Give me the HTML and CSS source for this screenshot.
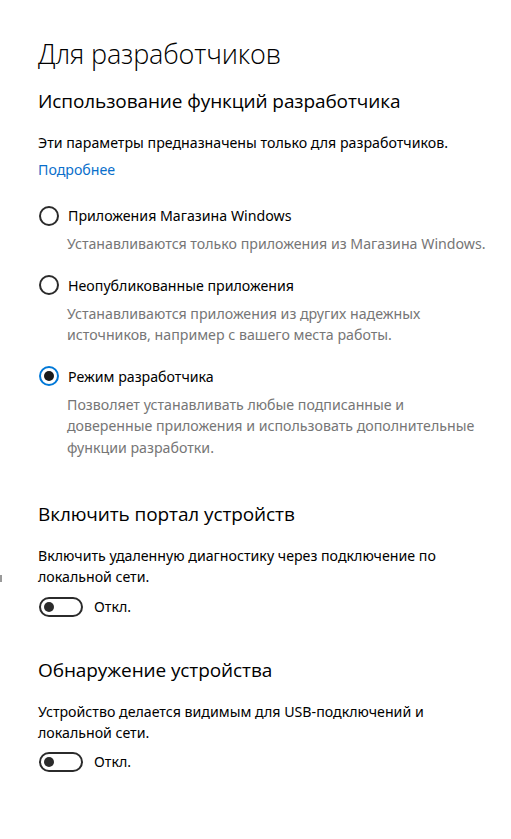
FILE: index.html
```html
<!DOCTYPE html>
<html lang="ru">
<head>
<meta charset="utf-8">
<title>Для разработчиков</title>
<link rel="stylesheet" href="styles.css">
</head>
<body>
<div class="edge-mark"></div>
<main class="page">
  <h1 class="title">Для разработчиков</h1>

  <section class="group">
    <h2 class="heading heading-first">Использование функций разработчика</h2>
    <p class="text intro">Эти параметры предназначены только для разработчиков.</p>
    <a class="link" href="#">Подробнее</a>

    <div class="options">
      <div class="option">
        <div class="radio-row">
          <span class="radio"></span>
          <span class="label">Приложения Магазина Windows</span>
        </div>
        <p class="hint">Устанавливаются только приложения из Магазина Windows.</p>
      </div>
      <div class="option">
        <div class="radio-row">
          <span class="radio"></span>
          <span class="label">Неопубликованные приложения</span>
        </div>
        <p class="hint">Устанавливаются приложения из других надежных<br>источников, например с вашего места работы.</p>
      </div>
      <div class="option">
        <div class="radio-row">
          <span class="radio radio-on"><span class="radio-dot"></span></span>
          <span class="label">Режим разработчика</span>
        </div>
        <p class="hint">Позволяет устанавливать любые подписанные и<br>доверенные приложения и использовать дополнительные<br>функции разработки.</p>
      </div>
    </div>
  </section>

  <section class="group group-toggle portal">
    <h2 class="heading">Включить портал устройств</h2>
    <p class="text">Включить удаленную диагностику через подключение по<br>локальной сети.</p>
    <div class="toggle-row">
      <span class="toggle"><span class="knob"></span></span>
      <span class="toggle-label">Откл.</span>
    </div>
  </section>

  <section class="group group-toggle discovery">
    <h2 class="heading">Обнаружение устройства</h2>
    <p class="text">Устройство делается видимым для USB-подключений и<br>локальной сети.</p>
    <div class="toggle-row">
      <span class="toggle"><span class="knob"></span></span>
      <span class="toggle-label">Откл.</span>
    </div>
  </section>
</main>
</body>
</html>
```

FILE: styles.css
```css
* { box-sizing: border-box; }

html, body {
  margin: 0;
  padding: 0;
  background: #ffffff;
}

body {
  font-family: "Noto Sans", "Open Sans", "Liberation Sans", sans-serif;
  color: #000000;
  position: relative;
  min-height: 839px;
}

.edge-mark {
  position: absolute;
  left: 0;
  top: 575px;
  width: 2px;
  height: 7px;
  background: #9a9a9a;
}

.page {
  display: flex;
  flex-direction: column;
  padding: 36px 0 0 38px;
}

.title {
  margin: 0;
  font-family: "Open Sans", "Noto Sans", sans-serif;
  font-weight: 300;
  font-size: 27px;
  line-height: 36px;
  letter-spacing: -0.15px;
}

.group {
  display: flex;
  flex-direction: column;
  align-items: flex-start;
}

.heading {
  margin: 15px 0 0 0;
  font-family: "Open Sans", "Noto Sans", sans-serif;
  font-weight: 400;
  font-size: 19px;
  line-height: 28px;
  letter-spacing: -0.1px;
}

.portal .heading {
  margin-top: 42px;
}

.discovery .heading {
  margin-top: 39px;
}

.text {
  margin: 17px 0 0 0;
  font-size: 14.2px;
  line-height: 21px;
}

.discovery .text {
  margin-top: 17px;
}

.link {
  margin-top: 6px;
  font-size: 14.2px;
  line-height: 21px;
  color: #0a6fcb;
  text-decoration: none;
}

.options {
  display: flex;
  flex-direction: column;
  gap: 20px;
  margin-top: 25px;
}

.option {
  display: flex;
  flex-direction: column;
  gap: 7px;
}

.radio-row {
  display: flex;
  align-items: center;
  gap: 9px;
  height: 21px;
  margin-left: 1px;
}

.radio {
  width: 20px;
  height: 20px;
  border: 2px solid #2b2b2b;
  border-radius: 50%;
  display: flex;
  align-items: center;
  justify-content: center;
  flex: none;
}

.radio-on {
  border-color: #0078d7;
}

.radio-dot {
  width: 10px;
  height: 10px;
  border-radius: 50%;
  background: #1a1a1a;
}

.label {
  font-size: 14.2px;
  line-height: 21px;
}

.hint {
  margin: 0 0 0 29px;
  font-size: 14.2px;
  line-height: 21.5px;
  color: #767676;
}

.toggle-row {
  display: flex;
  align-items: center;
  gap: 11px;
  margin-top: 9px;
  margin-left: 1px;
}

.discovery .toggle-row {
  margin-top: 8px;
}

.toggle {
  width: 44px;
  height: 20px;
  border: 2px solid #2b2b2b;
  border-radius: 10px;
  display: flex;
  align-items: center;
  padding-left: 3px;
  flex: none;
}

.knob {
  width: 10px;
  height: 10px;
  border-radius: 50%;
  background: #2b2b2b;
}

.toggle-label {
  font-size: 14.2px;
  line-height: 21px;
}
```
